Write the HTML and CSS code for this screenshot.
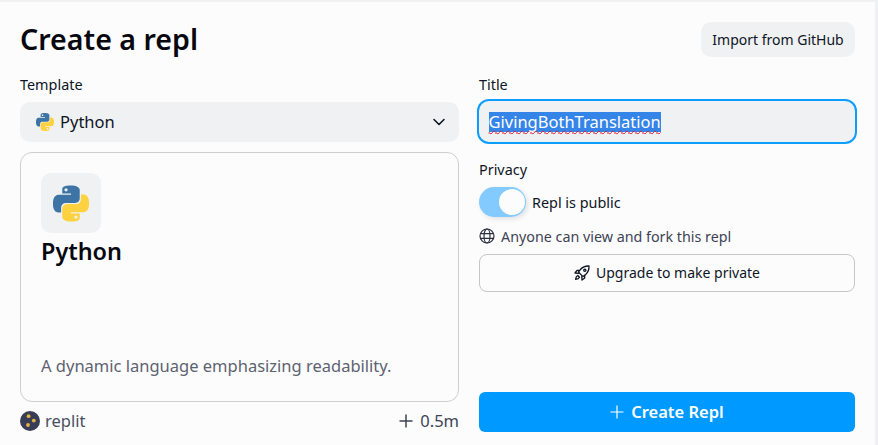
FILE: index.html
```html
<!DOCTYPE html>
<html lang="en">
<head>
<meta charset="utf-8">
<title>Create a repl</title>
<link rel="stylesheet" href="styles.css">
</head>
<body>
<svg class="defs" width="0" height="0" aria-hidden="true">
  <symbol id="py" viewBox="0 0 24 24">
    <path fill="#3d74a5" fill-rule="evenodd" d="M14.25.18l.9.2.73.26.59.3.45.32.34.34.25.34.16.33.1.3.04.26.02.2-.01.13V8.5l-.05.63-.13.55-.21.46-.26.38-.3.31-.33.25-.35.19-.35.14-.33.1-.3.07-.26.04-.21.02H8.77l-.69.05-.59.14-.5.22-.41.27-.33.32-.27.35-.2.36-.15.37-.1.35-.07.32-.04.27-.02.21v3.06H3.17l-.21-.03-.28-.07-.32-.12-.35-.18-.36-.26-.36-.36-.35-.46-.32-.59-.28-.73-.21-.88-.14-1.05-.05-1.23.06-1.22.16-1.04.24-.87.32-.71.36-.57.4-.44.42-.33.42-.24.4-.16.36-.1.32-.05.24-.01h.16l.06.01h8.16v-.83H6.18l-.01-2.75-.02-.37.05-.34.11-.31.17-.28.25-.26.31-.23.38-.2.44-.18.51-.15.58-.12.64-.1.71-.06.77-.04.84-.02 1.27.05zM7.95 2.16l-.23.33-.08.41.08.41.23.34.33.22.41.09.41-.09.33-.22.23-.34.08-.41-.08-.41-.23-.33-.33-.22-.41-.09-.41.09z"/>
    <path fill="#fdd23e" fill-rule="evenodd" d="M21.04 6.11l.28.06.32.12.35.18.36.27.36.35.35.47.32.59.28.73.21.88.14 1.04.05 1.23-.06 1.23-.16 1.04-.24.86-.32.71-.36.57-.4.45-.42.33-.42.24-.4.16-.36.09-.32.05-.24.02-.16-.01h-8.22v.82h5.84l.01 2.76.02.36-.05.34-.11.31-.17.29-.25.25-.31.24-.38.2-.44.17-.51.15-.58.13-.64.09-.71.07-.77.04-.84.01-1.27-.04-1.07-.14-.9-.2-.73-.25-.59-.3-.45-.33-.34-.34-.25-.34-.16-.33-.1-.3-.04-.25-.02-.2.01-.13v-5.34l.05-.64.13-.54.21-.46.26-.38.3-.32.33-.24.35-.2.35-.14.33-.1.3-.06.26-.04.21-.02.13-.01h5.84l.69-.05.59-.14.5-.21.41-.28.33-.32.27-.35.2-.36.15-.36.1-.35.07-.32.04-.28.02-.21V6.07h2.09l.14.01zM14.57 20.36l-.23.33-.08.41.08.41.23.33.33.23.41.08.41-.08.33-.23.23-.33.08-.41-.08-.41-.23-.33-.33-.23-.41-.08-.41.08z"/>
  </symbol>
</svg>
<main class="panel">
  <header class="head">
    <h1 class="title">Create a repl</h1>
    <button class="import">Import from GitHub</button>
  </header>
  <div class="cols">
    <section class="col">
      <div class="label">Template</div>
      <div class="select">
        <svg class="select-icon"><use href="#py"/></svg>
        <span class="select-text">Python</span>
        <svg class="chevron" viewBox="0 0 16 16"><path d="M3 5.5l5 5 5-5" fill="none" stroke="#0e1525" stroke-width="1.6" stroke-linecap="round" stroke-linejoin="round"/></svg>
      </div>
      <article class="card">
        <div class="card-icon"><svg class="card-logo"><use href="#py"/></svg></div>
        <h2 class="card-title">Python</h2>
        <p class="card-desc">A dynamic language emphasizing readability.</p>
      </article>
      <footer class="foot">
        <span class="brand">
          <svg class="brand-icon" viewBox="0 0 20 20">
            <circle cx="10" cy="10" r="10" fill="#383d57"/>
            <circle cx="8.6" cy="5.2" r="1.9" fill="#e3b341"/>
            <circle cx="13.8" cy="9.6" r="1.9" fill="#e3b341"/>
            <circle cx="8" cy="14" r="1.9" fill="#e3b341"/>
          </svg>
          replit
        </span>
        <span class="runs">
          <svg class="plus" viewBox="0 0 16 16"><path d="M8 1.5v13M1.5 8h13" fill="none" stroke="#3d4354" stroke-width="1.5"/></svg>
          0.5m
        </span>
      </footer>
    </section>
    <section class="col">
      <div class="label">Title</div>
      <div class="input"><span class="selected">GivingBothTranslation</span></div>
      <div class="label privacy">Privacy</div>
      <div class="toggle-row">
        <span class="toggle"><span class="knob"></span></span>
        <span class="toggle-text">Repl is public</span>
      </div>
      <div class="hint">
        <svg class="globe" viewBox="0 0 16 16" fill="none" stroke="#2b3040" stroke-width="1.2">
          <circle cx="8" cy="8" r="7"/>
          <ellipse cx="8" cy="8" rx="3" ry="7"/>
          <path d="M1.4 5.6h13.2M1.4 10.4h13.2"/>
        </svg>
        Anyone can view and fork this repl
      </div>
      <button class="upgrade">
        <svg class="rocket" viewBox="0 0 16 16" fill="none" stroke="#0e1525" stroke-width="1.3" stroke-linejoin="round" stroke-linecap="round">
          <path d="M15 1c-3.6-.2-6.4 1-8.4 3.3L4.4 7 9 11.6l2.7-2.2C14 7.4 15.2 4.6 15 1z"/>
          <path d="M5.5 5.3H3L1 8l3.4.3M10.7 10.500V13L8 15l-.3-3.4"/>
          <circle cx="10.8" cy="5.2" r="1.1"/>
          <path d="M3.8 10.5c-1.300.5-2 1.800-2.200 3.900 2.100-.2 3.400-.9 3.900-2.200z"/>
        </svg>
        <span class="btn-text">Upgrade to make private</span>
      </button>
      <button class="create">
        <svg class="create-plus" viewBox="0 0 14 14"><path d="M7 .5v13M.5 7h13" fill="none" stroke="#fff" stroke-width="1.2"/></svg>
        <span class="btn-text">Create Repl</span>
      </button>
    </section>
  </div>
</main>
</body>
</html>
```

FILE: styles.css
```css
* { box-sizing: border-box; }
html, body { margin: 0; height: 100%; }
body {
  background: #f0f1f2;
  font-family: "Noto Sans", "Liberation Sans", sans-serif;
  color: #0e1525;
  overflow: hidden;
}
.defs { position: absolute; }
.panel {
  width: 875px;
  height: 443px;
  margin-top: 2px;
  background: #fcfcfd;
  padding: 20px;
}
.head {
  display: flex;
  justify-content: space-between;
  align-items: flex-start;
  height: 35px;
}
.title {
  margin: 0;
  font-size: 28.6px;
  line-height: 33px;
  font-weight: 600;
  color: #07080f;
}
.import {
  width: 154px;
  height: 35px;
  padding: 0;
  border: 0;
  border-radius: 10px;
  background: #f0f1f2;
  font: 400 14px "Noto Sans", sans-serif;
  color: #0e1525;
}
.cols {
  display: grid;
  grid-template-columns: 439px 376px;
  column-gap: 20px;
  margin-top: 18px;
  height: 357px;
}
.col { display: flex; flex-direction: column; min-width: 0; }
.label { font-size: 14.4px; line-height: 20px; color: #0e1525; }
.select {
  display: flex;
  align-items: center;
  height: 40px;
  margin-top: 7px;
  padding: 0 12px 0 16px;
  border-radius: 10px;
  background: #f0f1f2;
}
.select-icon { width: 18px; height: 18px; }
.select-text { margin: 0 0 2px 6px; font-size: 16.5px; }
.chevron { width: 16px; height: 16px; margin-left: auto; }
.card {
  display: flex;
  flex-direction: column;
  height: 250px;
  margin-top: 10px;
  padding: 20px;
  border: 1px solid #cdcfd2;
  border-radius: 12px;
}
.card-icon {
  display: flex;
  align-items: center;
  justify-content: center;
  width: 60px;
  height: 60px;
  border-radius: 10px;
  background: #f0f1f2;
}
.card-logo { width: 36px; height: 37px; }
.card-title {
  margin: 3px 0 0;
  font-size: 23.4px;
  line-height: 30px;
  font-weight: 600;
  color: #07080f;
}
.card-desc {
  margin: auto 0 0;
  padding-bottom: 3px;
  font-size: 16.5px;
  line-height: 24px;
  color: #5c6270;
}
.foot {
  display: flex;
  justify-content: space-between;
  align-items: center;
  height: 21px;
  margin-top: 8px;
  font-size: 16.5px;
}
.brand { display: flex; align-items: center; gap: 5px; color: #4a4f5e; }
.brand-icon { width: 20px; height: 20px; }
.runs { display: flex; align-items: center; gap: 6px; color: #3d4354; }
.plus { width: 16px; height: 16px; }
.input {
  display: flex;
  align-items: center;
  height: 45px;
  margin: 4px -2px 0;
  padding: 0 9.5px;
  border: 2.5px solid #0d9dfd;
  border-radius: 12px;
  background: #f0f1f2;
  font-size: 16.5px;
}
.selected {
  background: #3584e8;
  color: #fff;
  line-height: 20px;
  text-decoration: underline wavy #e0142c 1px;
  text-decoration-skip-ink: none;
  text-underline-offset: 2px;
}
.privacy { margin-top: 16px; }
.toggle-row { display: flex; align-items: center; gap: 6px; margin-top: 7px; }
.toggle {
  display: flex;
  justify-content: flex-end;
  align-items: center;
  width: 47px;
  height: 30px;
  padding-right: 1px;
  border-radius: 15px;
  background: #83cbff;
  box-shadow: 2px 2px 5px rgba(14, 21, 37, .12);
}
.knob { width: 26px; height: 26px; border-radius: 50%; background: #fcfcfd; }
.toggle-text { font-size: 14.4px; color: #0e1525; }
.hint {
  display: flex;
  align-items: center;
  gap: 6px;
  height: 20px;
  margin-top: 9px;
  font-size: 14.3px;
  color: #3d4354;
}
.globe { width: 16px; height: 16px; }
.upgrade {
  display: flex;
  align-items: center;
  justify-content: center;
  gap: 6px;
  height: 38px;
  margin-top: 8px;
  padding: 0;
  border: 1px solid #c4c6c9;
  border-radius: 8px;
  background: #fcfcfd;
  font: 400 14px "Noto Sans", sans-serif;
  color: #0e1525;
}
.btn-text { margin-bottom: 2px; }
.rocket { width: 16px; height: 16px; }
.create {
  display: flex;
  align-items: center;
  justify-content: center;
  gap: 7px;
  height: 40px;
  margin-top: auto;
  padding: 0;
  border: 0;
  border-radius: 6px;
  background: #0099ff;
  color: #fff;
  font: 600 16.5px "Noto Sans", sans-serif;
}
.create-plus { width: 14px; height: 14px; }
```
